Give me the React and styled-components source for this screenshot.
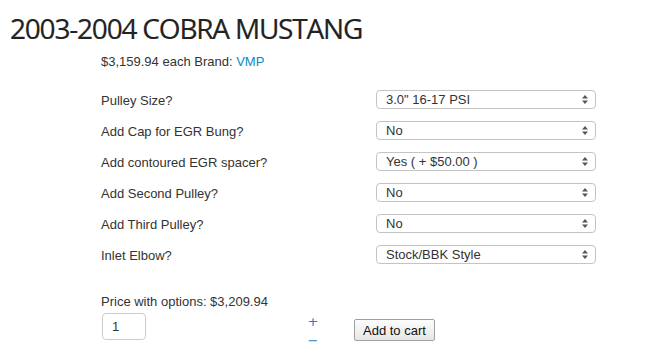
import React from 'react';
import styled, { createGlobalStyle } from 'styled-components';

const options = [
  { label: 'Pulley Size?', value: '3.0" 16-17 PSI' },
  { label: 'Add Cap for EGR Bung?', value: 'No' },
  { label: 'Add contoured EGR spacer?', value: 'Yes ( + $50.00 )' },
  { label: 'Add Second Pulley?', value: 'No' },
  { label: 'Add Third Pulley?', value: 'No' },
  { label: 'Inlet Elbow?', value: 'Stock/BBK Style' },
];

const App = () => {
  return (
    <Page>
      <GlobalStyle />
      <Title>2003-2004 COBRA MUSTANG</Title>
      <Content>
        <PriceLine>
          $3,159.94 each Brand: <BrandLink href="#">VMP</BrandLink>
        </PriceLine>
        <OptionsGrid>
          {options.map(opt => (
            <OptionRow key={opt.label}>
              <Label>{opt.label}</Label>
              <SelectWrap>
                <Select defaultValue={opt.value}>
                  <option>{opt.value}</option>
                </Select>
                <Arrows width="6" height="9" viewBox="0 0 6 9">
                  <path d="M3 0 L6 3.5 L0 3.5 Z" fill="#555" />
                  <path d="M3 9 L6 5.5 L0 5.5 Z" fill="#555" />
                </Arrows>
              </SelectWrap>
            </OptionRow>
          ))}
        </OptionsGrid>
        <Total>Price with options: $3,209.94</Total>
        <CartRow>
          <QtyInput defaultValue="1" />
          <Stepper>
            <StepButton>+</StepButton>
            <StepButton>&minus;</StepButton>
          </Stepper>
          <CartButton>Add to cart</CartButton>
        </CartRow>
      </Content>
    </Page>
  );
};

const GlobalStyle = createGlobalStyle`
  html, body {
    margin: 0;
    padding: 0;
    background: #fff;
    overflow: hidden;
  }
  body {
    font-family: "Liberation Sans", Arial, sans-serif;
    color: #333;
  }
`;

const Page = styled.div`
  width: 660px;
  height: 351px;
  overflow: hidden;
`;

const Title = styled.h1`
  margin: 8px 0 0 10px;
  font-family: "Open Sans", sans-serif;
  font-weight: 400;
  font-size: 28px;
  letter-spacing: -1.2px;
  line-height: 40px;
  color: #222;
  white-space: nowrap;
  -webkit-text-stroke: 0.2px #222;
`;

const Content = styled.div`
  padding-left: 101px;
`;

const PriceLine = styled.div`
  margin-top: 6px;
  font-size: 13px;
  line-height: 16px;
  color: #333;
`;

const BrandLink = styled.a`
  color: #0a88c8;
  text-decoration: none;
`;

const OptionsGrid = styled.div`
  display: flex;
  flex-direction: column;
  gap: 12px;
  margin-top: 19px;
  width: 495px;
`;

const OptionRow = styled.div`
  display: grid;
  grid-template-columns: 275px 220px;
  align-items: center;
  height: 19px;
`;

const Label = styled.span`
  font-size: 13px;
  line-height: 16px;
  color: #333;
  padding-top: 4px;
`;

const SelectWrap = styled.div`
  position: relative;
  width: 220px;
  height: 19px;
`;

const Select = styled.select`
  appearance: none;
  -webkit-appearance: none;
  width: 100%;
  height: 19px;
  margin: 0;
  padding: 0 0 0 9px;
  border: 1px solid #c4c4c4;
  border-radius: 4px;
  background: #fff;
  font-family: "Liberation Sans", Arial, sans-serif;
  font-size: 13px;
  color: #333;
  box-sizing: border-box;
`;

const Arrows = styled.svg`
  position: absolute;
  right: 8px;
  top: 5px;
  pointer-events: none;
`;

const Total = styled.div`
  margin-top: 31px;
  font-size: 13px;
  line-height: 16px;
  color: #333;
`;

const CartRow = styled.div`
  display: flex;
  align-items: flex-start;
  margin-top: 3px;
`;

const QtyInput = styled.input`
  width: 44px;
  height: 27px;
  box-sizing: border-box;
  margin: 0 0 0 1px;
  padding: 0 0 0 9px;
  border: 1px solid #ccc;
  border-radius: 4px;
  font-family: "Liberation Sans", Arial, sans-serif;
  font-size: 13px;
  color: #333;
`;

const Stepper = styled.div`
  display: flex;
  flex-direction: column;
  align-items: center;
  margin-left: 162px;
  margin-top: -1px;
  width: 10px;
`;

const StepButton = styled.span`
  font-family: "DejaVu Sans", sans-serif;
  font-size: 13px;
  line-height: 19px;
  color: #2a80c8;
  cursor: pointer;
`;

const CartButton = styled.button`
  margin: 6px 0 0 36px;
  height: 22px;
  padding: 0 8px;
  border: 1px solid #a0a0a0;
  border-radius: 2px;
  background: linear-gradient(#fdfdfd, #e6e6e6);
  font-family: "Liberation Sans", Arial, sans-serif;
  font-size: 13px;
  color: #111;
`;

export default App;
